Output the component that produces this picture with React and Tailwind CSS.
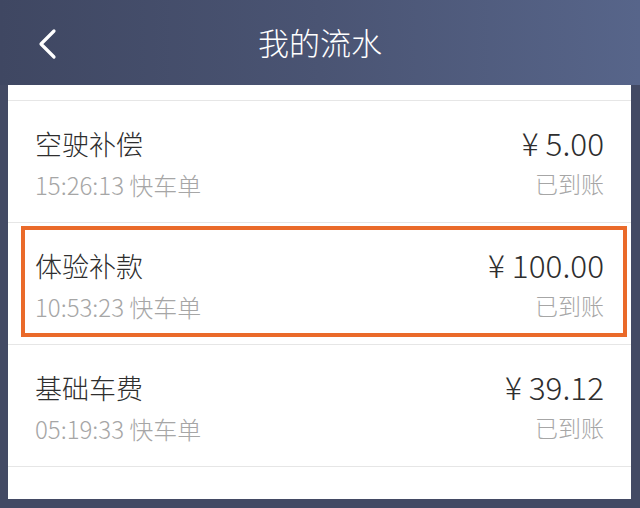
import React from 'react';

const rows = [
  { title: '空驶补偿', time: '15:26:13 快车单', amount: '¥ 5.00', status: '已到账' },
  { title: '体验补款', time: '10:53:23 快车单', amount: '¥ 100.00', status: '已到账', marked: true },
  { title: '基础车费', time: '05:19:33 快车单', amount: '¥ 39.12', status: '已到账' },
];

const font = { fontFamily: '"Noto Sans CJK SC", "Noto Sans", sans-serif' };

export default function App() {
  return (
    <div className="w-[640px] h-[508px] bg-[#434a64] overflow-hidden flex flex-col font-light" style={font}>
      {/* Header */}
      <div className="h-[85px] shrink-0 relative flex items-center justify-center bg-gradient-to-r from-[#3f4762] via-[#4a5473] to-[#57658a]">
        <svg className="absolute left-[36px] top-[28px]" width="24" height="32" viewBox="0 0 24 32" fill="none">
          <path d="M18 3 L5 16 L18 29" stroke="white" strokeWidth="3.2" strokeLinecap="round" strokeLinejoin="round" />
        </svg>
        <span className="text-white text-[31px] leading-none -mt-[3px]">我的流水</span>
      </div>

      {/* List */}
      <div className="ml-[8px] w-[623px] h-[414px] bg-white pt-[15px]">
        {rows.map((r) => (
          <div key={r.title} className="relative border-t border-[#e6e6e6] h-[122px] flex justify-between pl-[27px] pr-[27px]">
            <div className="flex flex-col pt-[25px]">
              <span className="text-[27px] leading-[36px] text-[#2e2e2e]">{r.title}</span>
              <span className="text-[24px] leading-[30px] mt-[8px] text-[#a6a6a6]">{r.time}</span>
            </div>
            <div className="flex flex-col items-end pt-[22px]">
              <span className="text-[31.5px] leading-[39px] text-[#2e2e2e]">{r.amount}</span>
              <span className="text-[23px] leading-[30px] mt-[6px] text-[#a6a6a6]">{r.status}</span>
            </div>
            {r.marked && (
              <div className="absolute left-[13px] right-[4px] top-[3px] h-[111px] border-[4px] border-[#ea6a2a]" />
            )}
          </div>
        ))}
        <div className="border-t border-[#e6e6e6]" />
      </div>
    </div>
  );
}
